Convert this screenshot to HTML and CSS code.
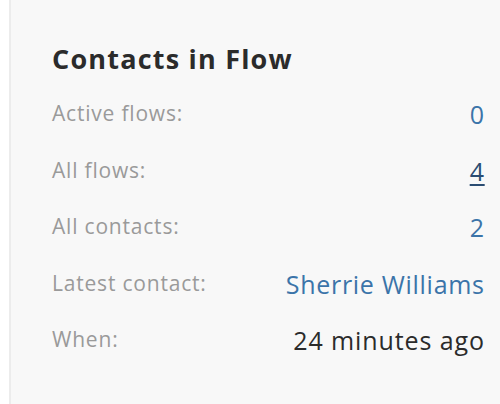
FILE: index.html
```html
<!DOCTYPE html>
<html>
<head>
<meta charset="utf-8">
<link rel="stylesheet" href="styles.css">
</head>
<body>
<div class="card">
  <h2 class="title">Contacts in Flow</h2>
  <div class="rows">
    <div class="row"><span class="label">Active flows:</span><span class="value link">0</span></div>
    <div class="row"><span class="label">All flows:</span><span class="value link dark">4</span></div>
    <div class="row"><span class="label">All contacts:</span><span class="value link">2</span></div>
    <div class="row"><span class="label">Latest contact:</span><span class="value link">Sherrie Williams</span></div>
    <div class="row"><span class="label">When:</span><span class="value text">24 minutes ago</span></div>
  </div>
</div>
</body>
</html>
```
FILE: styles.css
```css
html, body {
  margin: 0;
  padding: 0;
  background: #ffffff;
  height: 100%;
}
body {
  font-family: "Open Sans", "Lato", sans-serif;
}
.card {
  margin-left: 9px;
  border-left: 2px solid #ececec;
  background: #f8f8f8;
  min-height: 404px;
  box-sizing: border-box;
  padding: 41px 16px 0 41px;
}
.title {
  margin: 0;
  font-size: 27px;
  font-weight: 700;
  letter-spacing: 1.2px;
  color: #2b2b2b;
  line-height: 36px;
}
.rows {
  display: flex;
  flex-direction: column;
  margin-top: 17px;
}
.row {
  display: flex;
  justify-content: space-between;
  align-items: baseline;
  height: 56.6px;
}
.label {
  font-size: 21px;
  letter-spacing: 0.8px;
  color: #9a9a9a;
}
.value {
  font-size: 25px;
  letter-spacing: 0.7px;
  margin-right: -0.7px;
  position: relative;
  top: 3px;
}
.link {
  color: #3b74a9;
}
.dark {
  color: #2a4c72;
  text-decoration: underline;
  text-underline-offset: 3px;
}
.text {
  color: #2b2b2b;
  letter-spacing: 0.9px;
  margin-right: -0.9px;
}
```
